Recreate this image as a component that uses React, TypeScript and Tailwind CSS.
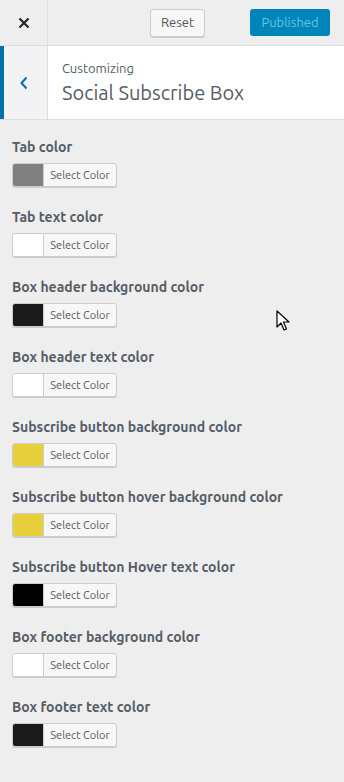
import React from 'react';

const items: { label: string; color: string }[] = [
  { label: 'Tab color', color: '#808080' },
  { label: 'Tab text color', color: '#ffffff' },
  { label: 'Box header background color', color: '#1a1a1a' },
  { label: 'Box header text color', color: '#ffffff' },
  { label: 'Subscribe button background color', color: '#e8cf3c' },
  { label: 'Subscribe button hover background color', color: '#e8cf3c' },
  { label: 'Subscribe button Hover text color', color: '#000000' },
  { label: 'Box footer background color', color: '#ffffff' },
  { label: 'Box footer text color', color: '#1a1a1a' },
];

function ColorPicker({ color }: { color: string }) {
  return (
    <button className="flex h-[24px] w-[105px] overflow-hidden rounded-[3px] border border-[#ccc] bg-[#f7f7f7] shadow-[0_1px_0_#ccc]">
      <span className="h-full w-[31px] border-r border-[#ccc]" style={{ backgroundColor: color }} />
      <span className="flex-1 pt-[3px] text-center text-[11px] leading-[16px] text-[#555]">Select Color</span>
    </button>
  );
}

export default function App() {
  return (
    <div className="relative h-[782px] w-[344px] overflow-hidden bg-[#eeeeee] font-['Ubuntu','Noto_Sans',sans-serif] text-[#555d66]">
      <div className="flex h-[46px] border-b border-[#dddddd] bg-[#eeeeee]">
        <div className="flex w-[48px] items-center justify-center border-r border-[#dddddd] text-[#23282d]">
          <svg width="14" height="14" viewBox="0 0 14 14">
            <path d="M2.5 2.5l9 9M11.5 2.5l-9 9" stroke="#23282d" strokeWidth="2.2" />
          </svg>
        </div>
        <div className="flex flex-1 items-center justify-end gap-[45px] pr-[14px]">
          <button className="h-[28px] w-[55px] rounded-[3px] border border-[#cccccc] bg-[#f7f7f7] text-[13px] text-[#555] shadow-[0_1px_0_#ccc]">
            Reset
          </button>
          <button className="h-[27px] w-[80px] rounded-[3px] bg-[#0085ba] text-[13px] text-[#66c6e4]">
            Published
          </button>
        </div>
      </div>
      <div className="flex h-[74px] border-b border-[#dddddd] bg-white">
        <div className="flex w-[48px] items-center justify-center border-r border-[#dddddd] border-l-[4px] border-l-[#0073aa] bg-[#f3f3f5] pr-[4px]">
          <svg width="10" height="14" viewBox="0 0 10 14">
            <path d="M7.5 1.5L2.5 7l5 5.5" fill="none" stroke="#0073aa" strokeWidth="2" />
          </svg>
        </div>
        <div className="flex flex-col justify-center pl-[14px] pb-[1px]">
          <span className="text-[13px] leading-[18px] text-[#555d66]">Customizing</span>
          <span className="mt-[4px] text-[20px] leading-[24px] text-[#555d66]">Social Subscribe Box</span>
        </div>
      </div>
      <div className="flex flex-col gap-[20px] px-[12px] pt-[17px]">
        {items.map((it) => (
          <div key={it.label} className="flex flex-col gap-[6px]">
            <span className="text-[14px] font-bold leading-[20px]">{it.label}</span>
            <ColorPicker color={it.color} />
          </div>
        ))}
      </div>
      <svg className="absolute left-[276px] top-[310px]" width="14" height="22" viewBox="0 0 14 22">
        <path d="M1 1v16l4-4 3 7 2.5-1-3-7h5.5z" fill="#fff" stroke="#000" strokeWidth="1.2" strokeLinejoin="round" />
      </svg>
    </div>
  );
}
